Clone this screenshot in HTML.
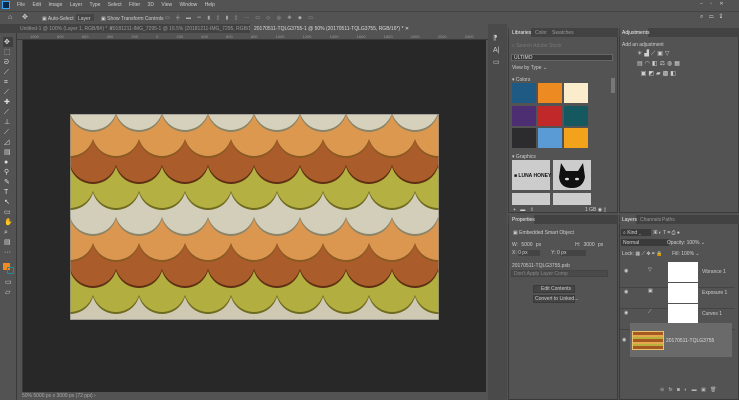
<!DOCTYPE html>
<html><head><meta charset="utf-8"><style>
*{margin:0;padding:0;box-sizing:border-box}
body{width:739px;height:400px;overflow:hidden;background:#535353;font-family:"Liberation Sans",sans-serif;font-size:5px;color:#ccc;position:relative}
.a{position:absolute}
.t{position:absolute;white-space:nowrap;font-size:5px;color:#cfcfcf}
.sw{position:absolute;width:24px;height:20px}
.lay{position:absolute;left:620px;width:115px;height:30px;border-bottom:1px solid #444}
.th{position:absolute;left:48px;top:4px;width:30px;height:20px;background:#fff}
</style></head><body>
<div class="a" style="left:0;top:0;width:739px;height:10px;background:#535353"></div>
<div class="a" style="left:2px;top:1px;width:8px;height:8px;background:#0d2a4a;border:1px solid #31a8ff"></div>
<div class="t" style="left:17px;top:2px;word-spacing:6px">File Edit Image Layer Type Select Filter 3D View Window Help</div>
<div class="t" style="left:700px;top:1px;word-spacing:6px">‒ ▫ ✕</div>
<div class="a" style="left:0;top:11px;width:739px;height:13px;background:#535353;border-top:1px solid #444"></div>
<div class="t" style="left:8px;top:14px;font-size:7px">⌂</div>
<div class="t" style="left:22px;top:13px;font-size:7px">✥</div>
<div class="t" style="left:42px;top:16px">▣ Auto-Select</div>
<div class="a" style="left:76px;top:14px;width:18px;height:7px;background:#454545"></div>
<div class="t" style="left:78px;top:16px">Layer</div>
<div class="t" style="left:101px;top:16px">▣ Show Transform Controls</div>
<div class="t" style="left:165px;top:15px;color:#aaa;word-spacing:5px">▭ ╪ ▬ ═ ▮ ▯ ▮ ▯ ··· ▭ ◇ ◎ ✥ ◆ ▭</div>
<div class="t" style="left:700px;top:14px;font-size:6px;word-spacing:4px">⌕ ▭ ⇪</div>
<div class="a" style="left:0;top:24px;width:488px;height:9px;background:#424242"></div>
<div class="t" style="left:20px;top:26px;color:#999">Untitled-1 @ 100% (Layer 1, RGB/8#) * ✕</div>
<div class="t" style="left:110px;top:26px;color:#999">20181211-IMG_7295-1 @ 16.5% (20181211-IMG_7295, RGB/16*) * ✕</div>
<div class="a" style="left:250px;top:24px;width:238px;height:9px;background:#535353;overflow:hidden"><div class="t" style="left:4px;top:2px;color:#ddd">20170511-TQLG3755-1 @ 50% (20170511-TQLG3755, RGB/16*) * ✕</div></div>
<div class="a" style="left:0;top:33px;width:17px;height:367px;background:#535353;border-right:1px solid #3a3a3a"></div>
<div class="a" style="left:3px;top:37px;width:10px;height:10px;background:#3f3f3f"></div>
<div class="t" style="left:4px;top:38px;font-size:7px;line-height:10px;color:#ddd">✥<br>⬚<br>ᘐ<br>⟋<br>⌗<br>⟋<br>✚<br>⟋<br>⊥<br>⟋<br>◿<br>▤<br>●<br>⚲<br>✎<br>T<br>↖<br>▭<br>✋<br>⌕<br>▤<br>···</div>
<div class="a" style="left:3px;top:263px;width:7px;height:7px;background:#f08a22"></div>
<div class="a" style="left:7px;top:267px;width:7px;height:7px;border:1px solid #1a8fa0"></div>
<div class="t" style="left:5px;top:278px;font-size:7px;line-height:10px">▭<br>▱</div>
<div class="a" style="left:17px;top:33px;width:471px;height:7px;background:#535353;border-bottom:1px solid #3a3a3a"></div>
<div class="t" style="left:30px;top:34px;color:#999;font-size:4px;word-spacing:17px">1000 800 600 400 200 0 200 400 600 800 1000 1200 1400 1600 1800 2000 2200 2400 2600</div>
<div class="a" style="left:17px;top:40px;width:6px;height:352px;background:#535353;border-right:1px solid #3a3a3a"></div>
<div class="a" style="left:23px;top:40px;width:463px;height:352px;background:#282828"></div>
<svg class="a" style="left:70px;top:114px" width="369" height="206" viewBox="0 0 369 206">
<defs><g id="r"><circle cx="-46" cy="0" r="24"/><circle cx="0" cy="0" r="24"/><circle cx="46" cy="0" r="24"/><circle cx="92" cy="0" r="24"/><circle cx="138" cy="0" r="24"/><circle cx="184" cy="0" r="24"/><circle cx="230" cy="0" r="24"/><circle cx="276" cy="0" r="24"/><circle cx="322" cy="0" r="24"/><circle cx="368" cy="0" r="24"/><circle cx="414" cy="0" r="24"/></g></defs>
<rect width="369" height="206" fill="#cdc6b0"/>
<use href="#r" x="23" y="200" fill="#6b5a2a"/><use href="#r" x="23" y="198" fill="#cfc9b3"/>
<use href="#r" x="0" y="176" fill="#6e6a1e"/><use href="#r" x="0" y="174" fill="#b3ae40"/>
<use href="#r" x="23" y="150" fill="#5e2f12"/><use href="#r" x="23" y="148" fill="#aa5c2a"/>
<use href="#r" x="0" y="124" fill="#8a5a22"/><use href="#r" x="0" y="122" fill="#db9650"/>
<use href="#r" x="23" y="98" fill="#8a8468"/><use href="#r" x="23" y="96" fill="#d3ceb9"/>
<use href="#r" x="0" y="72" fill="#6e6a1e"/><use href="#r" x="0" y="70" fill="#b4b042"/>
<use href="#r" x="23" y="46" fill="#5e2f12"/><use href="#r" x="23" y="44" fill="#aa5c2a"/>
<use href="#r" x="0" y="20" fill="#8a5a22"/><use href="#r" x="0" y="18" fill="#dd9850"/>
<use href="#r" x="23" y="-6" fill="#8a8468"/><use href="#r" x="23" y="-8" fill="#d6d1bd"/>
<rect x="0.5" y="0.5" width="368" height="205" fill="none" stroke="#888" stroke-width="0.6"/>
</svg>
<div class="a" style="left:17px;top:392px;width:471px;height:8px;background:#535353"></div>
<div class="t" style="left:22px;top:393px;color:#aaa">50%   5000 px x 3000 px (72 ppi)  ›</div>
<div class="a" style="left:488px;top:24px;width:19px;height:376px;background:#4a4a4a"></div>
<div class="t" style="left:493px;top:33px;font-size:7px;line-height:12px">⁋<br>A|<br>▭</div>
<div class="a" style="left:508px;top:28px;width:110px;height:185px;background:#535353;border:1px solid #3a3a3a"></div>
<div class="a" style="left:508px;top:28px;width:110px;height:9px;background:#424242"></div>
<div class="a" style="left:509px;top:28px;width:22px;height:9px;background:#535353"></div>
<div class="t" style="left:512px;top:30px;color:#eee">Libraries</div>
<div class="t" style="left:535px;top:30px;color:#999">Color</div>
<div class="t" style="left:552px;top:30px;color:#999">Swatches</div>
<div class="t" style="left:512px;top:43px;color:#777">⌕ Search Adobe Stock</div>
<div class="a" style="left:511px;top:54px;width:102px;height:7px;background:#3a3a3a;border:1px solid #666"></div>
<div class="t" style="left:514px;top:55px;color:#ddd">ULTIMO</div>
<div class="t" style="left:512px;top:65px">View by Type ⌄</div>
<div class="t" style="left:512px;top:77px">▾ Colors</div>
<div class="sw" style="left:512px;top:83px;background:#1f5a85"></div>
<div class="sw" style="left:538px;top:83px;background:#ee8a22"></div>
<div class="sw" style="left:564px;top:83px;background:#fbeccb"></div>
<div class="sw" style="left:512px;top:106px;background:#4e2e73"></div>
<div class="sw" style="left:538px;top:106px;background:#c0282a"></div>
<div class="sw" style="left:564px;top:106px;background:#16585f"></div>
<div class="sw" style="left:512px;top:128px;background:#2c2c2e"></div>
<div class="sw" style="left:538px;top:128px;background:#5b9bd5"></div>
<div class="sw" style="left:564px;top:128px;background:#f3a21b"></div>
<div class="t" style="left:512px;top:154px">▾ Graphics</div>
<div class="a" style="left:512px;top:160px;width:38px;height:30px;background:#ccc"></div>
<div class="t" style="left:514px;top:173px;color:#111;font-weight:bold">■ LUNA HONEY</div>
<div class="a" style="left:553px;top:160px;width:38px;height:30px;background:#ccc"></div>
<svg class="a" style="left:553px;top:160px" width="38" height="30"><path d="M8 3 L13 11 L25 11 L30 3 L32 17 Q30 28 19 28 Q7 28 6 17 Z" fill="#111"/><ellipse cx="14" cy="19" rx="2" ry="1.3" fill="#ddd"/><ellipse cx="24" cy="19" rx="2" ry="1.3" fill="#ddd"/></svg>
<div class="a" style="left:512px;top:193px;width:38px;height:12px;background:#ccc"></div>
<div class="a" style="left:553px;top:193px;width:38px;height:12px;background:#ccc"></div>
<div class="a" style="left:611px;top:78px;width:4px;height:15px;background:#777"></div>
<div class="t" style="left:513px;top:207px;word-spacing:3px">+ ▬ ⇪</div>
<div class="t" style="left:585px;top:207px">1 GB ◉ ▯</div>
<div class="a" style="left:619px;top:28px;width:120px;height:185px;background:#535353;border:1px solid #3a3a3a"></div>
<div class="a" style="left:619px;top:28px;width:120px;height:9px;background:#424242"></div>
<div class="a" style="left:620px;top:28px;width:28px;height:9px;background:#535353"></div>
<div class="t" style="left:622px;top:30px;color:#eee">Adjustments</div>
<div class="t" style="left:622px;top:42px">Add an adjustment</div>
<div class="t" style="left:637px;top:49px;font-size:6px;letter-spacing:2px;line-height:10px">☀▟⟋▣▽<br>▤◠◧⚖◍▦<br>&nbsp;▣◩▰▩◧</div>
<div class="a" style="left:508px;top:215px;width:110px;height:185px;background:#535353;border:1px solid #3a3a3a"></div>
<div class="a" style="left:508px;top:215px;width:110px;height:9px;background:#424242"></div>
<div class="a" style="left:509px;top:215px;width:25px;height:9px;background:#535353"></div>
<div class="t" style="left:512px;top:217px;color:#eee">Properties</div>
<div class="t" style="left:513px;top:230px">▣ Embedded Smart Object</div>
<div class="t" style="left:512px;top:242px;word-spacing:2px">W: 5000 px &nbsp;&nbsp;&nbsp;&nbsp;&nbsp;&nbsp;&nbsp;&nbsp;&nbsp;H: 3000 px</div>
<div class="a" style="left:518px;top:250px;width:22px;height:6px;background:#444"></div>
<div class="a" style="left:560px;top:250px;width:26px;height:6px;background:#444"></div>
<div class="t" style="left:512px;top:250px">X: 0 px &nbsp;&nbsp;&nbsp;&nbsp;&nbsp;&nbsp;&nbsp;&nbsp;&nbsp;&nbsp;&nbsp;&nbsp;&nbsp;&nbsp;&nbsp;&nbsp;Y: 0 px</div>
<div class="t" style="left:512px;top:263px">20170511-TQLG3755.psb</div>
<div class="a" style="left:511px;top:270px;width:97px;height:7px;background:#4a4a4a;border:1px solid #444"></div>
<div class="t" style="left:514px;top:271px;color:#888">Don't Apply Layer Comp</div>
<div class="a" style="left:533px;top:285px;width:42px;height:8px;background:#444;border:1px solid #3a3a3a"></div>
<div class="t" style="left:541px;top:286px">Edit Contents</div>
<div class="a" style="left:533px;top:295px;width:42px;height:8px;background:#444;border:1px solid #3a3a3a"></div>
<div class="t" style="left:535px;top:296px">Convert to Linked...</div>
<div class="a" style="left:619px;top:215px;width:120px;height:185px;background:#535353;border:1px solid #3a3a3a"></div>
<div class="a" style="left:619px;top:215px;width:120px;height:9px;background:#424242"></div>
<div class="a" style="left:620px;top:215px;width:16px;height:9px;background:#535353"></div>
<div class="t" style="left:622px;top:217px;color:#eee">Layers</div>
<div class="t" style="left:640px;top:217px;color:#999">Channels</div>
<div class="t" style="left:662px;top:217px;color:#999">Paths</div>
<div class="a" style="left:621px;top:229px;width:30px;height:7px;background:#3a3a3a"></div>
<div class="t" style="left:623px;top:230px">⌕ Kind ⌄ &nbsp;&nbsp;&nbsp;&nbsp;&nbsp;&nbsp;&nbsp;&nbsp;▣ ◐ T ⌗ ⎙ ●</div>
<div class="a" style="left:621px;top:239px;width:48px;height:7px;background:#3a3a3a"></div>
<div class="t" style="left:623px;top:240px">Normal &nbsp;&nbsp;&nbsp;&nbsp;&nbsp;&nbsp;&nbsp;&nbsp;&nbsp;&nbsp;&nbsp;&nbsp;&nbsp;&nbsp;&nbsp;&nbsp;&nbsp;&nbsp;&nbsp;Opacity: 100% ⌄</div>
<div class="t" style="left:622px;top:251px">Lock: ▦ ⟋ ✥ ⌗ 🔒 &nbsp;&nbsp;&nbsp;&nbsp;&nbsp;&nbsp;Fill: 100% ⌄</div>
<div class="lay" style="top:258px"><span class="t" style="left:4px;top:10px">◉</span><span class="t" style="left:28px;top:9px">▽</span><div class="th"></div><span class="t" style="left:82px;top:11px">Vibrance 1</span></div>
<div class="lay" style="top:279px"><span class="t" style="left:4px;top:10px">◉</span><span class="t" style="left:28px;top:9px">▣</span><div class="th"></div><span class="t" style="left:82px;top:11px">Exposure 1</span></div>
<div class="lay" style="top:300px"><span class="t" style="left:4px;top:10px">◉</span><span class="t" style="left:28px;top:9px">⟋</span><div class="th"></div><span class="t" style="left:82px;top:11px">Curves 1</span></div>
<div class="a" style="left:630px;top:323px;width:102px;height:34px;background:#6a6a6a"></div>
<div class="t" style="left:622px;top:337px">◉</div>
<div class="a" style="left:632px;top:331px;width:32px;height:19px;background:repeating-linear-gradient(#a5581f 0 3px,#e6a84e 3px 5px,#b8b03c 5px 7px);border:1px solid #e8c070"></div>
<div class="t" style="left:666px;top:338px;color:#ddd">20170511-TQLG3755</div>
<div class="t" style="left:660px;top:387px;word-spacing:3px;color:#bbb">⊖ fx ◙ ◐ ▬ ▣ 🗑</div>
</body></html>
